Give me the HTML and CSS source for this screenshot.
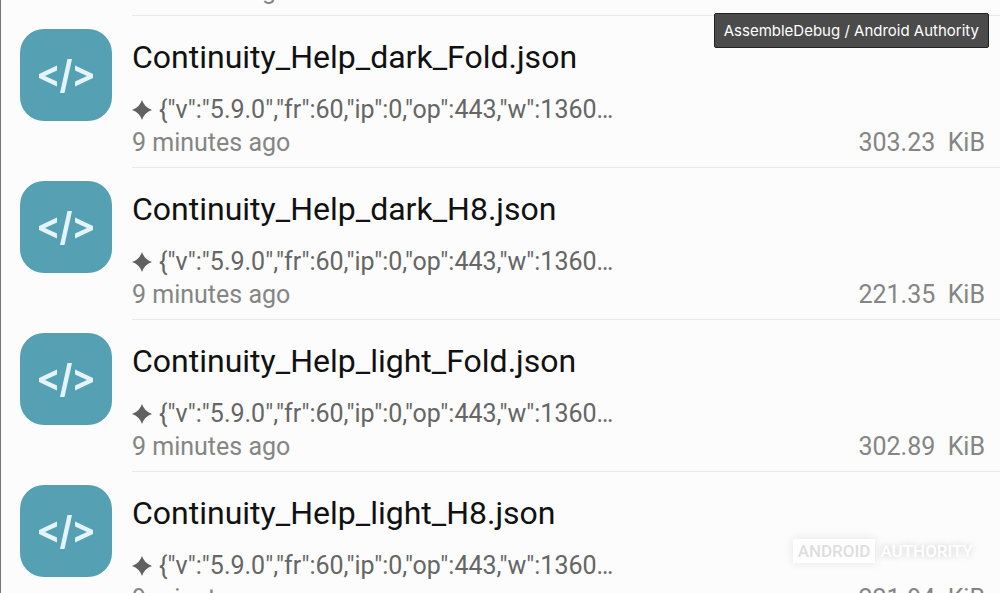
FILE: index.html
```
<!DOCTYPE html>
<html lang="en">
<head>
    <meta charset="utf-8">
    <title>Files</title>
    <link rel="stylesheet" href="styles.css">
</head>
<body>
    <!-- shared icons -->
    <svg class="sprite" width="0" height="0" aria-hidden="true">
        <symbol id="code" viewBox="0 0 92 92">
            <path d="M37 36.500 L19 45 V49 L37 57.500 V52.500 L25 47 L37 41.500 Z M55 36.500 L73 45 V49 L55 57.500 V52.500 L67 47 L55 41.500 Z M47.500 30 H52 L44.500 64 H40 Z"/>
        </symbol>
        <symbol id="spark" viewBox="0 0 20 20">
            <path d="M10 0 Q12.500 7.500 20 10 Q12.500 12.500 10 20 Q7.500 12.500 0 10 Q7.500 7.500 10 0 Z"/>
        </symbol>
    </svg>

    <ul class="file-list">
        <li class="file">
            <div class="info">
                <p class="meta"><span>9 minutes ago</span></p>
            </div>
        </li>
        <li class="file">
            <svg class="icon"><use href="#code"/></svg>
            <div class="info">
                <h2 class="name">Continuity_Help_dark_Fold.json</h2>
                <p class="preview"><svg class="spark"><use href="#spark"/></svg>{"v":"5.9.0","fr":60,"ip":0,"op":443,"w":1360…</p>
                <p class="meta"><span>9 minutes ago</span><span>303.23&nbsp; KiB</span></p>
            </div>
        </li>
        <li class="file">
            <svg class="icon"><use href="#code"/></svg>
            <div class="info">
                <h2 class="name">Continuity_Help_dark_H8.json</h2>
                <p class="preview"><svg class="spark"><use href="#spark"/></svg>{"v":"5.9.0","fr":60,"ip":0,"op":443,"w":1360…</p>
                <p class="meta"><span>9 minutes ago</span><span>221.35&nbsp; KiB</span></p>
            </div>
        </li>
        <li class="file">
            <svg class="icon"><use href="#code"/></svg>
            <div class="info">
                <h2 class="name">Continuity_Help_light_Fold.json</h2>
                <p class="preview"><svg class="spark"><use href="#spark"/></svg>{"v":"5.9.0","fr":60,"ip":0,"op":443,"w":1360…</p>
                <p class="meta"><span>9 minutes ago</span><span>302.89&nbsp; KiB</span></p>
            </div>
        </li>
        <li class="file">
            <svg class="icon"><use href="#code"/></svg>
            <div class="info">
                <h2 class="name">Continuity_Help_light_H8.json</h2>
                <p class="preview"><svg class="spark"><use href="#spark"/></svg>{"v":"5.9.0","fr":60,"ip":0,"op":443,"w":1360…</p>
                <p class="meta"><span>9 minutes ago</span><span>221.94&nbsp; KiB</span></p>
            </div>
        </li>
    </ul>

    <div class="credit">AssembleDebug / Android Authority</div>
    <div class="watermark"><span class="boxed">ANDROID</span><span>AUTHORITY</span></div>
</body>
</html>
```

FILE: styles.css
```
* {
    box-sizing: border-box;
}

body {
    position: relative;
    height: 100vh;
    margin: 0;
    overflow: hidden;
    background-color: #fcfcfc;
    border-left: 1px solid #777;
    font-family: Roboto, sans-serif;
}

.sprite {
    position: absolute;
}

/* scrolled so that the first row is almost out of view */
.file-list {
    margin: -136px 0 0;
    padding: 0;
    list-style: none;
}

.file {
    display: flex;
    height: 152px;
    padding-left: 19px;
}

.icon {
    flex: none;
    width: 92px;
    height: 92px;
    margin: 13px 20px 0 0;
    border-radius: 24px;
    background-color: #55a0b2;
    fill: #e4f4fa;
}

.info {
    flex: 1;
    display: flex;
    flex-direction: column;
    justify-content: flex-end;
    padding: 0 15px 8px 0;
    border-bottom: 1px solid #e9e9e9;
}

.file:first-child .info {
    margin-left: 112px;
}

.name {
    margin: 0 0 16px;
    font-size: 32px;
    font-weight: 400;
    line-height: 40px;
    color: #111;
}

.preview,
.meta {
    display: flex;
    align-items: center;
    margin: 0;
    font-size: 25px;
    line-height: 33px;
    color: #666;
}

.meta {
    justify-content: space-between;
    color: #858585;
}

.spark {
    width: 20px;
    height: 20px;
    margin-right: 7px;
    fill: #606060;
}

.credit {
    position: absolute;
    top: 13px;
    right: 11px;
    padding: 0 9px;
    border: 1px solid #222;
    border-radius: 2px;
    background-color: #4b4b4b;
    color: #fff;
    font-family: Inter, sans-serif;
    font-size: 15px;
    line-height: 33px;
}

.watermark {
    position: absolute;
    right: 27px;
    bottom: 30px;
    display: flex;
    gap: 5px;
    color: #fff;
    font-size: 17px;
    font-weight: 500;
    line-height: 24px;
    text-shadow: 0 0 6px #c8c8c8;
}

.boxed {
    padding: 0 5px;
    background-color: #fff;
    color: #dedede;
    box-shadow: 0 0 10px #e4e4e4;
    text-shadow: none;
}
```
